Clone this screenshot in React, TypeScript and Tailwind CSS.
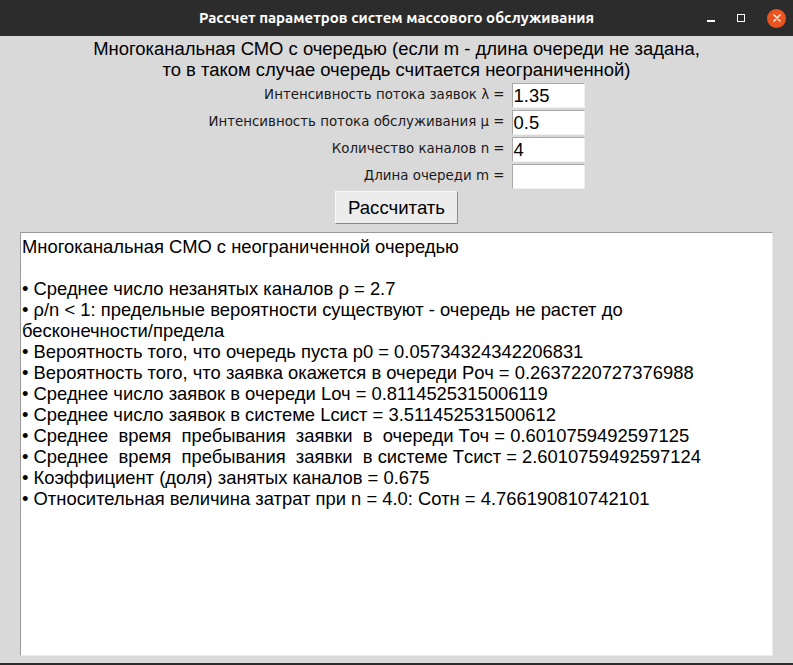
import React from 'react';

const fields = [
  { label: 'Интенсивность потока заявок λ =', value: '1.35' },
  { label: 'Интенсивность потока обслуживания μ =', value: '0.5' },
  { label: 'Количество каналов n =', value: '4' },
  { label: 'Длина очереди m =', value: '' },
];

const output = [
  'Многоканальная СМО с неограниченной очередью',
  '',
  '• Среднее число незанятых каналов ρ = 2.7',
  '• ρ/n < 1: предельные вероятности существуют - очередь не растет до',
  'бесконечности/предела',
  '• Вероятность того, что очередь пуста p0 = 0.05734324342206831',
  '• Вероятность того, что заявка окажется в очереди Pоч = 0.2637220727376988',
  '• Среднее число заявок в очереди Lоч = 0.8114525315006119',
  '• Среднее число заявок в системе Lсист = 3.511452531500612',
  '• Среднее  время  пребывания  заявки  в  очереди Tоч = 0.6010759492597125',
  '• Среднее  время  пребывания  заявки  в системе Tсист = 2.6010759492597124',
  '• Коэффициент (доля) занятых каналов = 0.675',
  '• Относительная величина затрат при n = 4.0: Cотн = 4.766190810742101',
];

function TitleBar() {
  return (
    <div className="relative flex h-[36px] items-center justify-center bg-[#2c2c2c]">
      <span className="text-[15px] font-bold text-white [font-family:Ubuntu,'DejaVu_Sans_Condensed','Liberation_Sans',sans-serif]">
        Рассчет параметров систем массового обслуживания
      </span>
      <div className="absolute right-[7px] top-0 flex h-full items-center gap-[22px]">
        <div className="mt-[6px] h-[2px] w-[8px] bg-white" />
        <div className="h-[8px] w-[8px] border border-white" />
        <div className="flex h-[19px] w-[19px] items-center justify-center rounded-full bg-[#e95420]">
          <svg width="8" height="8" viewBox="0 0 8 8">
            <path d="M1 1L7 7M7 1L1 7" stroke="white" strokeWidth="1.4" strokeLinecap="round" />
          </svg>
        </div>
      </div>
    </div>
  );
}

export default function App() {
  return (
    <div className="flex h-[665px] w-[793px] flex-col overflow-hidden bg-[#d9d9d9]">
      <TitleBar />

      <div className="flex flex-1 flex-col items-center">
        <div className="pt-[2px] text-center text-[18.45px] leading-[21px] text-black [font-family:'Liberation_Sans',Arial,sans-serif]">
          <div>Многоканальная СМО с очередью (если m - длина очереди не задана,</div>
          <div>то в таком случае очередь считается неограниченной)</div>
        </div>

        <div className="mt-[3px] grid grid-cols-[auto_auto] items-center gap-x-[7px] gap-y-[2px]">
          {fields.map(f => (
            <React.Fragment key={f.label}>
              <span className="justify-self-end text-[13.4px] text-[#1a1a1a] [font-family:'DejaVu_Sans',sans-serif]">
                {f.label}
              </span>
              <div className="flex h-[25px] w-[73px] items-center border border-l-[#a8a8a8] border-t-[#a8a8a8] border-b-[#f0f0f0] border-r-[#f0f0f0] bg-white px-[1px] text-[18.4px] text-black [font-family:'Liberation_Sans',Arial,sans-serif]">
                {f.value}
              </div>
            </React.Fragment>
          ))}
        </div>

        <button className="mt-[2px] h-[33px] w-[123px] border border-t-[#fafafa] border-l-[#fafafa] border-r-[#8a8a8a] border-b-[#8a8a8a] bg-[#ececec] text-[18.6px] text-black [font-family:'Liberation_Sans',Arial,sans-serif]">
          Рассчитать
        </button>

        <div className="mt-[8px] h-[424px] w-[753px] border border-l-[#9a9a9a] border-t-[#9a9a9a] border-r-[#ececec] border-b-[#ececec] bg-white px-[1px] pt-[3px] text-[18.4px] leading-[21px] text-black [font-family:'Liberation_Sans',Arial,sans-serif]">
          {output.map((line, i) => (
            <div key={i} className="h-[21px] whitespace-pre">
              {line}
            </div>
          ))}
        </div>
      </div>

      <div className="h-[2px] bg-[#2c2c2c]" />
    </div>
  );
}
